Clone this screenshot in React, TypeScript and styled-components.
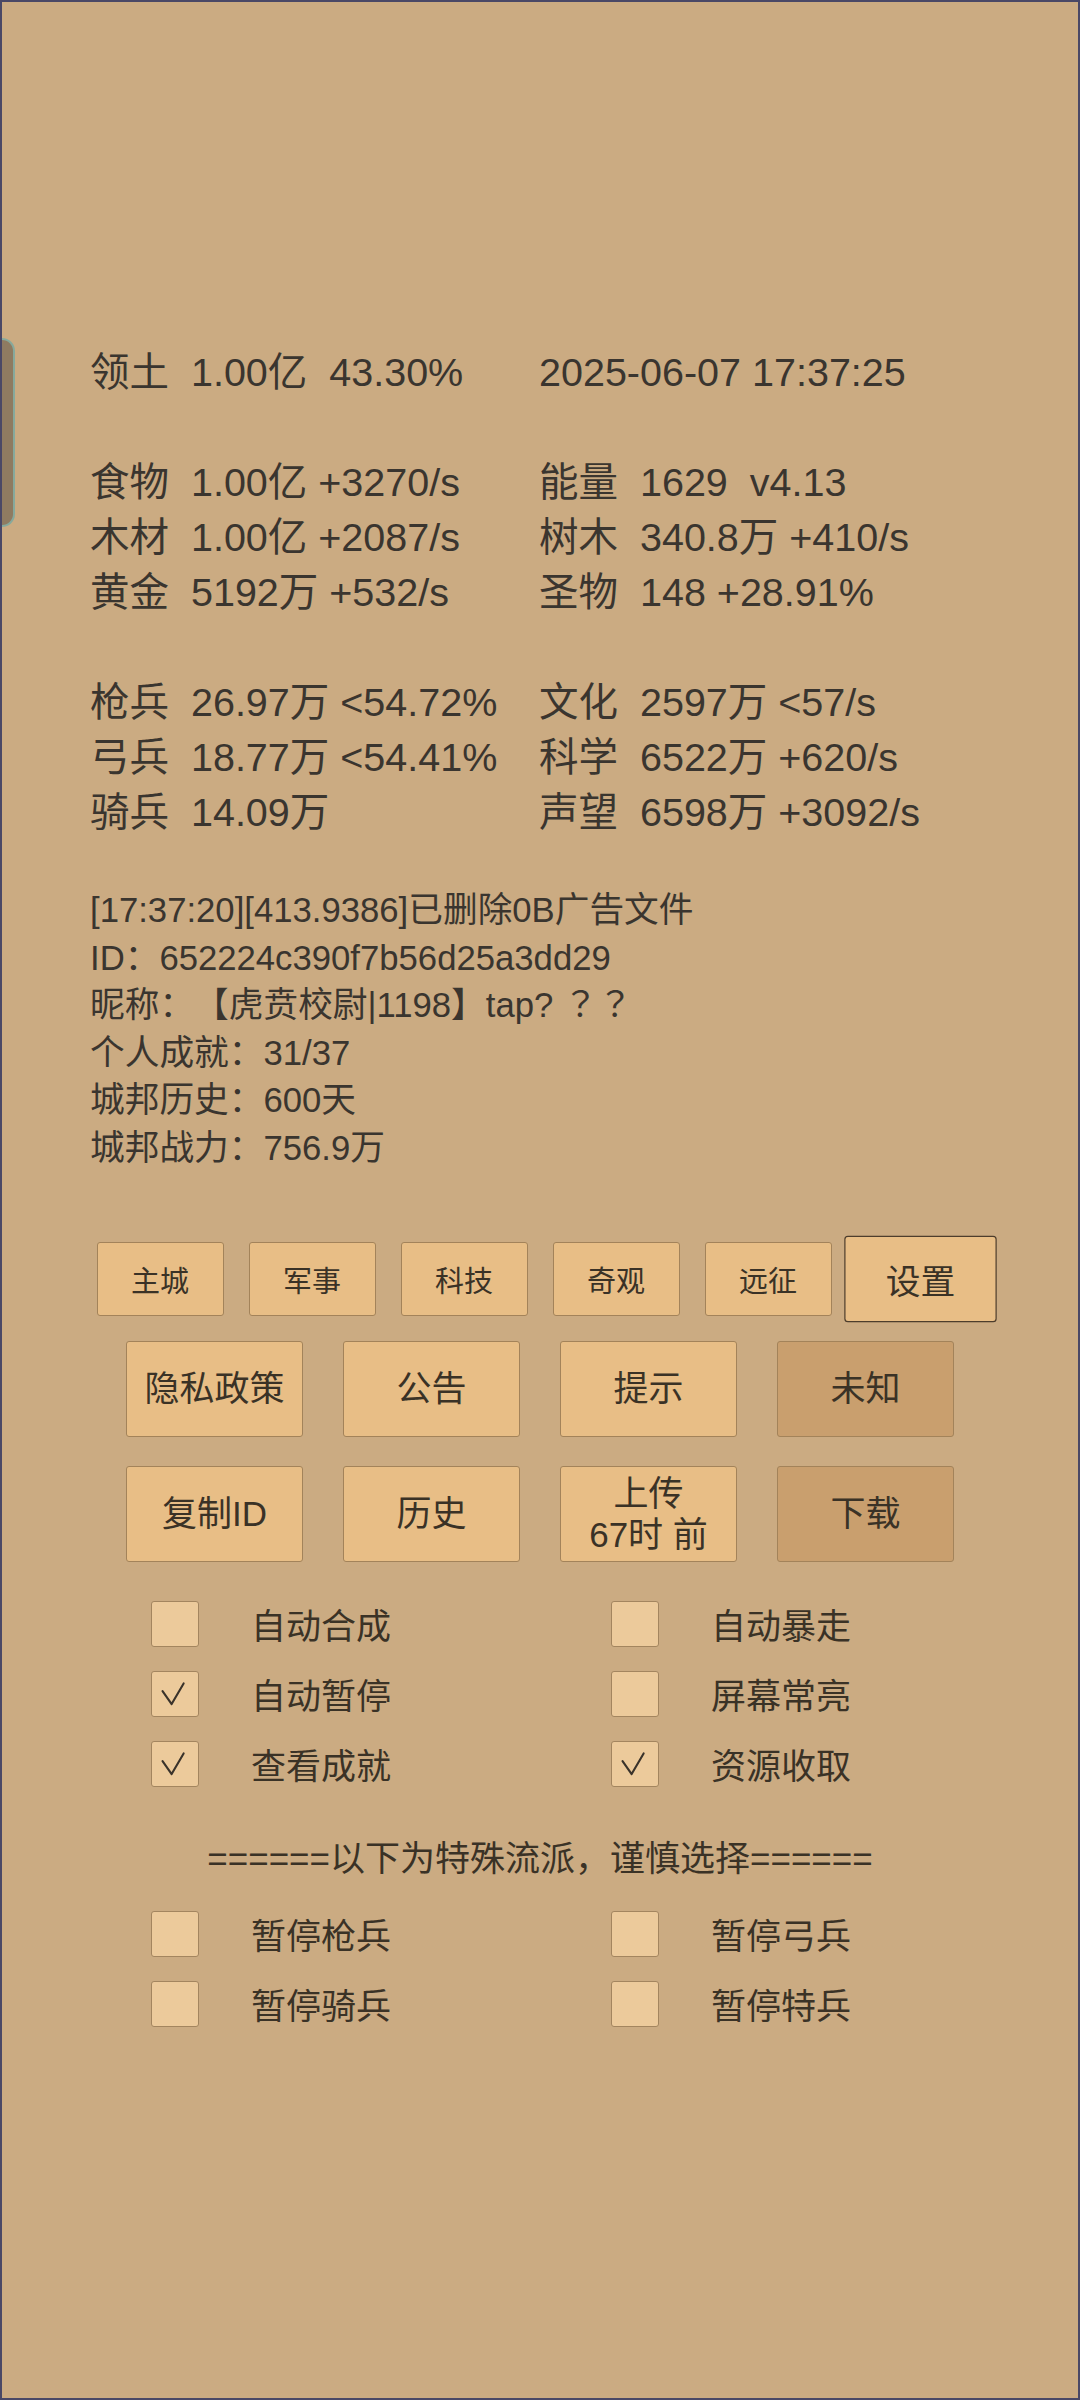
import styled, { createGlobalStyle } from 'styled-components'

const GlobalStyle = createGlobalStyle`
  html, body {
    margin: 0;
    padding: 0;
    background: #cbab82;
  }
  * {
    box-sizing: border-box;
  }
`;

const leftStats = [
  '领土  1.00亿  43.30%',
  '',
  '食物  1.00亿 +3270/s',
  '木材  1.00亿 +2087/s',
  '黄金  5192万 +532/s',
  '',
  '枪兵  26.97万 <54.72%',
  '弓兵  18.77万 <54.41%',
  '骑兵  14.09万',
];

const rightStats = [
  '2025-06-07 17:37:25',
  '',
  '能量  1629  v4.13',
  '树木  340.8万 +410/s',
  '圣物  148 +28.91%',
  '',
  '文化  2597万 <57/s',
  '科学  6522万 +620/s',
  '声望  6598万 +3092/s',
];

const tabs = ['主城', '军事', '科技', '奇观', '远征', '设置'];

const actionRows = [
  [
    { label: '隐私政策' },
    { label: '公告' },
    { label: '提示' },
    { label: '未知', dim: true },
  ],
  [
    { label: '复制ID' },
    { label: '历史' },
    { label: '上传\n67时 前' },
    { label: '下载', dim: true },
  ],
];

const options = [
  { label: '自动合成', checked: false },
  { label: '自动暴走', checked: false },
  { label: '自动暂停', checked: true },
  { label: '屏幕常亮', checked: false },
  { label: '查看成就', checked: true },
  { label: '资源收取', checked: true },
];

const specialOptions = [
  { label: '暂停枪兵', checked: false },
  { label: '暂停弓兵', checked: false },
  { label: '暂停骑兵', checked: false },
  { label: '暂停特兵', checked: false },
];

const CheckBox = ({ checked }: { checked: boolean }) => (
  <Box>
    {checked && (
      <svg width="48" height="46" viewBox="0 0 48 46">
        <polyline points="11,20 20.5,33.5 33,12" fill="none" stroke="#3a332b" strokeWidth="2.2" strokeLinecap="round" strokeLinejoin="round" />
      </svg>
    )}
  </Box>
);

const OptionGrid = ({ items, top }: { items: { label: string; checked: boolean }[]; top: number }) => (
  <Options $top={top}>
    {items.map((item) => (
      <OptionRow key={item.label}>
        <CheckBox checked={item.checked} />
        <OptionLabel>{item.label}</OptionLabel>
      </OptionRow>
    ))}
  </Options>
);

const App = () => {
  return (
    <>
      <GlobalStyle />
      <Frame>
        <SideTab />
        <Stats>
          <StatColumn>
            {leftStats.map((line, i) => (
              <StatLine key={i}>{line || '\u00a0'}</StatLine>
            ))}
          </StatColumn>
          <StatColumn>
            {rightStats.map((line, i) => (
              <StatLine key={i}>{line || '\u00a0'}</StatLine>
            ))}
          </StatColumn>
        </Stats>

        <Log>
          <LogLine>[17:37:20][413.9386]已删除0B广告文件</LogLine>
          <LogLine>ID：652224c390f7b56d25a3dd29</LogLine>
          <LogLine>昵称：【虎贲校尉|1198】tap? <CenteredMark>？？</CenteredMark></LogLine>
          <LogLine>个人成就：31/37</LogLine>
          <LogLine>城邦历史：600天</LogLine>
          <LogLine>城邦战力：756.9万</LogLine>
        </Log>

        <TabBar>
          {tabs.map((t) => (
            <TabButton key={t} $active={t === '设置'}>{t}</TabButton>
          ))}
        </TabBar>

        <ActionGrid>
          {actionRows.map((row, i) => (
            <ActionRow key={i}>
              {row.map((b) => (
                <ActionButton key={b.label} $dim={!!b.dim}>{b.label}</ActionButton>
              ))}
            </ActionRow>
          ))}
        </ActionGrid>

        <OptionGrid items={options} top={27} />
        <Separator>======以下为特殊流派，谨慎选择======</Separator>
        <OptionGrid items={specialOptions} top={0} />
      </Frame>
    </>
  )
}

const Frame = styled.div`
  position: relative;
  width: 1080px;
  height: 2400px;
  border: 2px solid #4a4866;
  background: #cbab82;
  color: #3a352f;
  font-family: "Liberation Sans", "Noto Sans CJK SC", sans-serif;
  text-spacing-trim: space-all;
  overflow: hidden;
`;

const SideTab = styled.div`
  position: absolute;
  left: 0;
  top: 336px;
  width: 13px;
  height: 189px;
  background: #8f7b61;
  border: 2px solid #87a99c;
  border-left: none;
  border-radius: 0 14px 14px 0;
`;

const Stats = styled.div`
  display: grid;
  grid-template-columns: 449px 1fr;
  padding: 343px 0 0 88px;
`;

const StatColumn = styled.div`
  display: flex;
  flex-direction: column;
`;

const StatLine = styled.div`
  font-size: 39.5px;
  line-height: 55px;
  height: 55px;
  white-space: pre;
`;

const Log = styled.div`
  padding: 47px 0 0 88px;
`;

const LogLine = styled.div`
  font-size: 34.7px;
  line-height: 47.6px;
  height: 47.6px;
  white-space: pre;
`;

const CenteredMark = styled.span`
  font-family: "Noto Sans CJK JP", "Noto Sans CJK SC", sans-serif;
  line-height: 0;
`;

const TabBar = styled.div`
  display: flex;
  justify-content: center;
  gap: 25px;
  margin-top: 69px;
  height: 74px;
`;

const TabButton = styled.div<{ $active: boolean }>`
  width: 127px;
  height: 74px;
  display: flex;
  align-items: center;
  justify-content: center;
  background: #e8be86;
  border: ${(p) => (p.$active ? '1.5px solid #4d3d2c' : '1px solid #a3835a')};
  border-radius: 3px;
  font-size: 29px;
  color: #3a3226;
  transform: ${(p) => (p.$active ? 'scale(1.2, 1.17)' : 'none')};
`;

const ActionGrid = styled.div`
  display: flex;
  flex-direction: column;
  gap: 29px;
  margin-top: 25px;
`;

const ActionRow = styled.div`
  display: flex;
  justify-content: center;
  gap: 40px;
`;

const ActionButton = styled.div<{ $dim: boolean }>`
  width: 177px;
  height: 96px;
  display: flex;
  align-items: center;
  justify-content: center;
  text-align: center;
  white-space: pre;
  background: ${(p) => (p.$dim ? '#c99f6e' : '#e8be86')};
  border: 1px solid #a3835a;
  border-radius: 3px;
  font-size: 35px;
  line-height: 41px;
  color: #3a3226;
`;

const Options = styled.div<{ $top: number }>`
  display: grid;
  grid-template-columns: 460px 460px;
  padding-left: 149px;
  margin-top: ${(p) => p.$top}px;
`;

const OptionRow = styled.div`
  display: flex;
  align-items: center;
  height: 70px;
`;

const Box = styled.div`
  width: 48px;
  height: 46px;
  display: flex;
  align-items: center;
  justify-content: center;
  background: #ecca9b;
  border: 1px solid #a3855f;
  border-radius: 3px;
  overflow: hidden;
`;

const OptionLabel = styled.span`
  margin-left: 52px;
  font-size: 35px;
  color: #3a3226;
`;

const Separator = styled.div`
  height: 100px;
  padding-top: 14px;
  display: flex;
  align-items: center;
  justify-content: center;
  font-size: 35px;
  color: #3a3226;
  white-space: pre;
`;

export default App
